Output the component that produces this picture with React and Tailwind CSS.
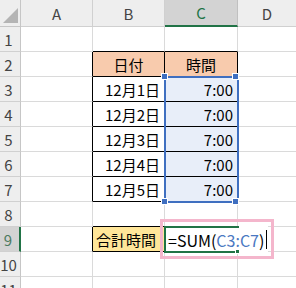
const rows = [
  { n: 1 },
  { n: 2, b: "日付", c: "時間", head: true },
  { n: 3, b: "12月1日", c: "7:00" },
  { n: 4, b: "12月2日", c: "7:00" },
  { n: 5, b: "12月3日", c: "7:00" },
  { n: 6, b: "12月4日", c: "7:00" },
  { n: 7, b: "12月5日", c: "7:00" },
  { n: 8 },
  { n: 9, b: "合計時間", total: true },
  { n: 10 },
  { n: 11 },
];

const inTable = (n) => n >= 2 && n <= 7;

function Handle({ className }) {
  return (
    <div className={`absolute w-[7px] h-[7px] bg-[#3f6fc0] border border-white ${className}`} />
  );
}

export default function App() {
  return (
    <div className="relative w-[296px] h-[288px] overflow-hidden bg-white font-['Noto_Sans_CJK_JP',sans-serif] text-[15px] text-black leading-none">
      <div className="grid grid-cols-[21px_72px_72px_73px_58px] grid-rows-[27px_repeat(11,25px)]">
        {/* column headers */}
        <div className="relative bg-[#eeeeee] border-r border-b border-[#c6c6c6]">
          <svg className="absolute left-0 top-0" width="21" height="27" viewBox="0 0 21 27">
            <polygon points="3,23 18,23 18,8" fill="#b4b4b4" />
          </svg>
        </div>
        <div className="flex items-center justify-center bg-[#eeeeee] border-r border-b border-[#d0d0d0] text-[#444]">A</div>
        <div className="flex items-center justify-center bg-[#eeeeee] border-r border-b border-[#d0d0d0] text-[#444]">B</div>
        <div className="flex items-center justify-center bg-[#d3d3d3] border-r border-r-[#c0c0c0] border-b-2 border-b-[#217346] text-[#217346]">C</div>
        <div className="flex items-center justify-center bg-[#eeeeee] border-b border-[#d0d0d0] text-[#444]">D</div>

        {rows.map((r) => (
          <div key={r.n} className="contents">
            <div
              className={`flex items-center justify-center pr-[3px] border-b border-b-[#d0d0d0] ${
                r.total
                  ? "bg-[#d3d3d3] border-r-2 border-r-[#217346] text-[#4d7a5f]"
                  : "bg-[#eeeeee] border-r border-r-[#c6c6c6] text-[#444]"
              }`}
            >
              {r.n}
            </div>
            {/* A */}
            <div
              className={`border-b border-b-[#dadada] border-r ${
                inTable(r.n) || r.total ? "border-r-black" : "border-r-[#dadada]"
              }`}
            />
            {/* B */}
            <div
              className={`flex items-center border-r border-b ${
                inTable(r.n) || r.total ? "border-r-black" : "border-r-[#dadada]"
              } ${
                r.n === 1 || inTable(r.n) || r.n === 8 || r.total ? "border-b-black" : "border-b-[#dadada]"
              } ${r.head ? "bg-[#f8cbad] justify-center" : ""} ${
                r.total ? "bg-[#ffe699] pl-[3px]" : ""
              } ${inTable(r.n) && !r.head ? "justify-end pr-[4px]" : ""}`}
            >
              {r.b}
            </div>
            {/* C */}
            <div
              className={`flex items-center border-r border-b ${
                inTable(r.n) ? "border-r-black" : "border-r-[#dadada]"
              } ${r.n === 1 || inTable(r.n) ? "border-b-black" : "border-b-[#dadada]"} ${
                r.head ? "bg-[#f8cbad] justify-center" : ""
              } ${inTable(r.n) && !r.head ? "bg-[#e8eef9] justify-end pr-[4px]" : ""}`}
            >
              {r.c}
            </div>
            {/* D */}
            <div className="border-b border-b-[#dadada]" />
          </div>
        ))}
      </div>

      {/* referenced range C3:C7 */}
      <div className="absolute left-[164px] top-[76px] w-[75px] h-[127px] border-2 border-[#3f6fc0]" />
      <Handle className="left-[161px] top-[73px]" />
      <Handle className="left-[232px] top-[73px]" />
      <Handle className="left-[161px] top-[198px]" />
      <Handle className="left-[232px] top-[198px]" />

      {/* formula being typed in C9, spilling over D9 */}
      <div className="absolute left-[164px] top-[226px] w-[104px] h-[27px] bg-white">
        <div className="absolute left-0 top-0 w-[75px] h-[27px] border-2 border-r-0 border-[#217346]" />
        <div className="absolute left-[71px] top-[23px] w-[5px] h-[5px] bg-[#217346] border border-white" />
        <div className="absolute left-[4px] top-0 h-[27px] flex items-center text-[16px]">
          <span>=SUM(</span>
          <span className="text-[#4a78c2]">C3:C7</span>
          <span>)</span>
          <span className="ml-[2px] w-px h-[19px] bg-black" />
        </div>
      </div>

      {/* highlight around the formula */}
      <div className="absolute left-[160px] top-[219px] w-[114px] h-[40px] border-[3px] border-[#f4b6cc]" />
    </div>
  );
}
